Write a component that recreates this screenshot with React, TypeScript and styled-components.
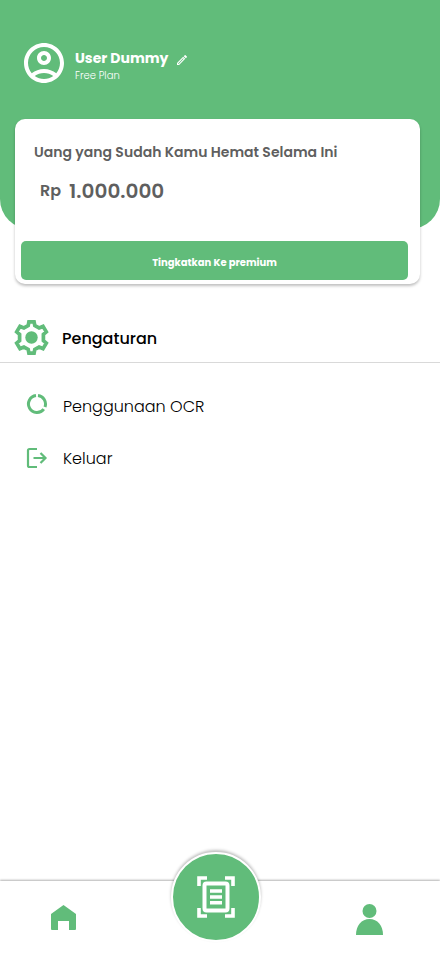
import React from 'react';
import styled, { createGlobalStyle } from 'styled-components';

const GREEN = '#61bc7a';

const Global = createGlobalStyle`
  *, *::before, *::after { box-sizing: border-box; }
  body { margin: 0; background: #fff; font-family: Poppins, Inter, sans-serif; color: #000; }
  button { font: inherit; color: inherit; border: 0; background: none; padding: 0; cursor: pointer; }
  a { color: inherit; text-decoration: none; }
  h1, h2, p, ul { margin: 0; padding: 0; }
  svg { display: block; flex: none; }
`;

const Page = styled.div`
  display: flex;
  flex-direction: column;
  min-height: 100vh;
`;

const Header = styled.header`
  display: flex;
  align-items: flex-start;
  gap: 11px;
  padding: 43px 24px 146px;
  background: ${GREEN};
  border-radius: 0 0 30px 30px;
  color: #fff;
`;

const NameRow = styled.div`
  display: flex;
  align-items: center;
  gap: 9px;
  padding-top: 4px;
`;

const UserName = styled.h1`
  font-size: 14px;
  line-height: 22px;
  font-weight: 700;
`;

const EditButton = styled.button`
  && { padding-top: 4px; }
`;

const Plan = styled.p`
  font-size: 10px;
  line-height: 14px;
  font-weight: 300;
`;

const Card = styled.section`
  margin: -110px 20px 0 15px;
  padding: 22px 12px 4px 6px;
  background: #fff;
  border-radius: 10px;
  box-shadow: 0 2px 3px rgba(0, 0, 0, 0.25);
  color: #5f5f5f;
`;

const CardTitle = styled.h2`
  padding-left: 13px;
  font-size: 14px;
  line-height: 22px;
  font-weight: 600;
`;

const Amount = styled.p`
  display: flex;
  align-items: center;
  gap: 8px;
  padding: 12px 19px 34px;
  font-size: 20px;
  line-height: 32px;
  font-weight: 600;
`;

const Currency = styled.span`
  font-size: 16px;
`;

const UpgradeButton = styled.button`
  display: block;
  width: 100%;
  height: 39px;
  border-radius: 5px;
  && { padding-top: 4px; background: ${GREEN}; color: #fff; font-size: 10px; font-weight: 700; }
`;

const SettingsTitle = styled.div`
  display: flex;
  align-items: center;
  gap: 13px;
  margin-top: 36px;
  padding: 0 14px 7px;
  border-bottom: 1px solid #d9d9d9;
`;

const SectionName = styled.h2`
  && { padding-top: 2px; }
  font-size: 16px;
  line-height: 24px;
  font-weight: 500;
`;

const Menu = styled.ul`
  display: flex;
  flex-direction: column;
  gap: 26px;
  && { padding: 30px 26px; }
  list-style: none;
`;

const MenuButton = styled.button`
  display: flex;
  align-items: center;
  gap: 15px;
  && { font-size: 16px; line-height: 24px; font-weight: 300; }
`;

const MenuLabel = styled.span`
  padding-top: 2px;
`;

const TabBar = styled.nav`
  display: grid;
  grid-template-columns: 1fr 90px 1fr;
  align-items: start;
  height: 75px;
  margin-top: auto;
  padding: 0 57px 0 49px;
  box-shadow: 0 -1px 2px rgba(0, 0, 0, 0.3);
  background: #fff;
`;

const Tab = styled.a<{ $end?: boolean }>`
  justify-self: ${(p) => (p.$end ? 'end' : 'start')};
  padding: 23px 0 0 2px;
`;

const ScanButton = styled.button`
  display: grid;
  place-items: center;
  width: 90px;
  height: 90px;
  margin-top: -29px;
  border-radius: 50%;
  && { background: ${GREEN}; border: 2px solid #fff; }
  box-shadow: 0 -2px 3px rgba(0, 0, 0, 0.25);
`;

const AccountIcon = () => (
  <svg width="40" height="40" viewBox="2 2 20 20" fill="#fff" aria-hidden="true">
    <path d="M12 2C6.48 2 2 6.48 2 12s4.48 10 10 10 10-4.48 10-10S17.52 2 12 2zM7.35 18.5C8.66 17.56 10.26 17 12 17s3.34.56 4.65 1.5C15.34 19.44 13.74 20 12 20s-3.34-.56-4.65-1.5zm10.79-1.38C16.45 15.8 14.32 15 12 15s-4.45.8-6.14 2.12C4.7 15.73 4 13.95 4 12c0-4.42 3.58-8 8-8s8 3.58 8 8c0 1.95-.7 3.73-1.86 5.12z" />
    <path d="M12 6c-1.93 0-3.5 1.57-3.5 3.5S10.07 13 12 13s3.5-1.57 3.5-3.5S13.93 6 12 6zm0 5c-.83 0-1.5-.67-1.5-1.5S11.17 8 12 8s1.5.67 1.5 1.5S12.83 11 12 11z" />
  </svg>
);

const PencilIcon = () => (
  <svg width="10" height="10" viewBox="3 3 18 18" fill="#fff" aria-hidden="true">
    <path d="M14.06 9.02l.92.92L5.92 19H5v-.92l9.06-9.06M17.66 3c-.25 0-.51.1-.7.29l-1.83 1.83 3.75 3.75 1.83-1.83c.39-.39.39-1.02 0-1.41l-2.34-2.34c-.2-.2-.45-.29-.71-.29zm-3.6 3.19L3 17.25V21h3.75L17.81 9.94l-3.75-3.75z" />
  </svg>
);

const GearIcon = () => (
  <svg width="35" height="35" viewBox="0 0 35 35" fill="none" stroke={GREEN} strokeWidth="3.7" aria-hidden="true">
    <path d="M14.9 1.9L14.2 5.5 9.9 7.9 6 6.4 2.7 11.9 5.6 14.4V20.6L2.7 23.1 6 28.6 9.9 27.1 14.2 29.5 14.9 33.1H20.1L20.8 29.5 25.1 27.1 29 28.6 32.3 23.1 29.4 20.6V14.4L32.3 11.9 29 6.4 25.1 7.9 20.8 5.5 20.1 1.9z" />
    <circle cx="17.5" cy="17.5" r="6.2" fill={GREEN} stroke="none" />
  </svg>
);

const UsageIcon = () => (
  <svg width="22" height="26" viewBox="0 0 22 26" fill="none" stroke={GREEN} strokeWidth="3" aria-hidden="true">
    <path d="M12 2.6A8.5 8.5 0 0 1 19 13.9" />
    <path d="M17.8 16.1A8.5 8.5 0 1 1 10 2.6" />
  </svg>
);

const LogoutIcon = () => (
  <svg width="22" height="22" viewBox="0 0 22 22" fill="none" stroke={GREEN} strokeWidth="2.2" aria-hidden="true">
    <path d="M11 2H3.5Q2 2 2 3.5v15Q2 20 3.5 20H11M7.5 11h12M14.5 6l5 5-5 5" />
  </svg>
);

const HomeIcon = () => (
  <svg width="25" height="26" viewBox="0 0 25 26" fill={GREEN} aria-hidden="true">
    <path d="M12.5 1 25 10v15q0 1-1 1h-6v-9H7v9H1q-1 0-1-1V10z" />
  </svg>
);

const PersonIcon = () => (
  <svg width="27" height="31" viewBox="0 0 27 31" fill={GREEN} aria-hidden="true">
    <circle cx="13.5" cy="7" r="7" />
    <path d="M0 31C0 21.5 5.5 15 13.5 15S27 21.5 27 31z" />
  </svg>
);

const ScanIcon = () => (
  <svg width="38" height="42" viewBox="0 0 38 42" fill="none" stroke="#fff" aria-hidden="true">
    <path strokeWidth="3.6" d="M10 2H2v8M28 2h8v8M10 40H2v-8M28 40h8v-8" />
    <rect x="7.5" y="7.5" width="23" height="27" rx="2" strokeWidth="4" />
    <path strokeWidth="3.6" d="M13 15h12M13 21h12M13 26.8h12" />
  </svg>
);

export default function App() {
  return (
    <Page>
      <Global />
      <Header>
        <AccountIcon />
        <div>
          <NameRow>
            <UserName>User Dummy</UserName>
            <EditButton type="button" aria-label="Edit nama">
              <PencilIcon />
            </EditButton>
          </NameRow>
          <Plan>Free Plan</Plan>
        </div>
      </Header>
      <main>
        <Card>
          <CardTitle>Uang yang Sudah Kamu Hemat Selama Ini</CardTitle>
          <Amount>
            <Currency>Rp</Currency>
            <span>1.000.000</span>
          </Amount>
          <UpgradeButton type="button">Tingkatkan Ke premium</UpgradeButton>
        </Card>
        <SettingsTitle>
          <GearIcon />
          <SectionName>Pengaturan</SectionName>
        </SettingsTitle>
        <Menu>
          <li>
            <MenuButton type="button">
              <UsageIcon />
              <MenuLabel>Penggunaan OCR</MenuLabel>
            </MenuButton>
          </li>
          <li>
            <MenuButton type="button">
              <LogoutIcon />
              <MenuLabel>Keluar</MenuLabel>
            </MenuButton>
          </li>
        </Menu>
      </main>
      <TabBar aria-label="Navigasi utama">
        <Tab href="#beranda" aria-label="Beranda">
          <HomeIcon />
        </Tab>
        <ScanButton type="button" aria-label="Pindai struk">
          <ScanIcon />
        </ScanButton>
        <Tab href="#profil" aria-label="Profil" $end>
          <PersonIcon />
        </Tab>
      </TabBar>
    </Page>
  );
}
